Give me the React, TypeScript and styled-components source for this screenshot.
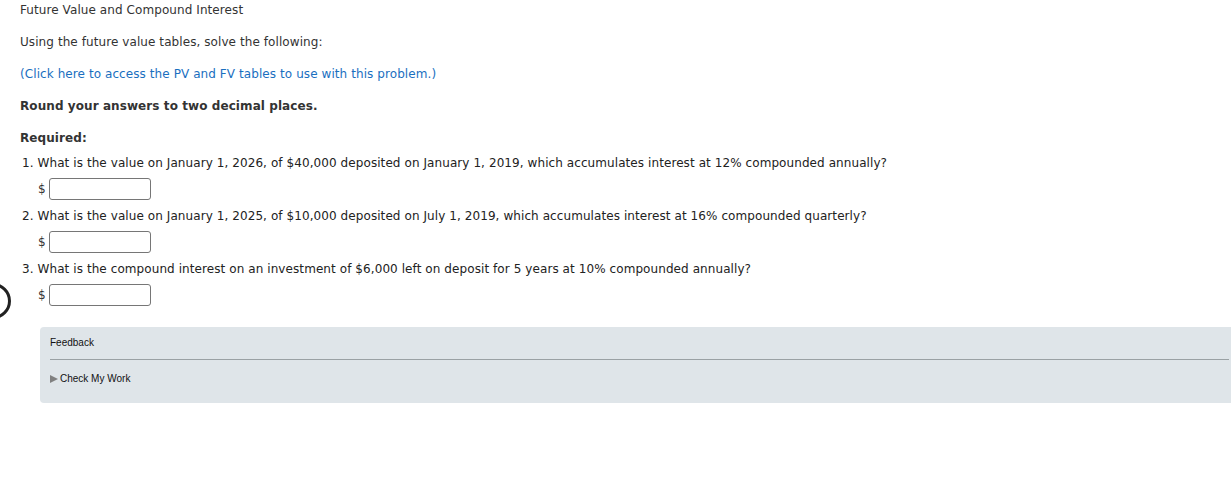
import React from "react";
import styled, { createGlobalStyle } from "styled-components";

const Global = createGlobalStyle`
  html, body { margin: 0; padding: 0; background: #fff; }
  body { font-family: "DejaVu Sans", Verdana, sans-serif; font-size: 12px; color: #333; letter-spacing: 0.08px; }
`;

const Page = styled.div`
  position: relative;
  padding: 1px 0 0 20px;
  overflow: hidden;
`;

const Para = styled.p<{ $bold?: boolean; $gap?: number }>`
  margin: 0 0 ${(p) => (p.$gap ?? 14)}px 0;
  line-height: 18px;
  font-weight: ${(p) => (p.$bold ? 700 : 400)};
`;

const Link = styled.a`
  color: #1a6fbf;
  text-decoration: none;
  cursor: pointer;
`;

const List = styled.ol`
  margin: 0;
  padding: 0 0 0 2px;
  list-style: none;
`;

const Item = styled.li`
  margin: 0 0 7px 0;
`;

const Question = styled.div`
  line-height: 18px;
  color: #222;
  margin-bottom: 6px;
`;

const AnswerRow = styled.div`
  display: flex;
  align-items: center;
  gap: 3px;
  padding-left: 16px;
  height: 22px;
`;

const Dollar = styled.span`
  font-size: 12px;
  color: #333;
`;

const Input = styled.input`
  box-sizing: border-box;
  width: 102px;
  height: 22px;
  border: 1px solid #767676;
  border-radius: 3px;
  padding: 0 4px;
  margin: 0;
  background: #fff;
`;

const Panel = styled.div`
  margin: 21px 0 0 20px;
  background: #dfe5e9;
  border-radius: 4px 0 0 4px;
  padding: 9px 2px 17px 10px;
  font-family: "Liberation Sans", Arial, sans-serif;
  font-size: 10px;
  letter-spacing: 0;
  color: #111;
`;

const PanelTitle = styled.div`
  line-height: 14px;
  padding-bottom: 9px;
  border-bottom: 1px solid #9aa1a4;
`;

const Toggle = styled.div`
  display: flex;
  align-items: center;
  line-height: 14px;
  margin-top: 12px;
`;

const Triangle = styled.span`
  display: inline-block;
  width: 0;
  height: 0;
  border-top: 4px solid transparent;
  border-bottom: 4px solid transparent;
  border-left: 8px solid #808080;
  margin: 0 2px 0 0;
`;

const Ring = styled.div`
  position: absolute;
  left: -25px;
  top: 283px;
  width: 36px;
  height: 36px;
  box-sizing: border-box;
  border: 3px solid #222;
  border-radius: 50%;
`;

const questions = [
  "What is the value on January 1, 2026, of $40,000 deposited on January 1, 2019, which accumulates interest at 12% compounded annually?",
  "What is the value on January 1, 2025, of $10,000 deposited on July 1, 2019, which accumulates interest at 16% compounded quarterly?",
  "What is the compound interest on an investment of $6,000 left on deposit for 5 years at 10% compounded annually?",
];

export default function App() {
  return (
    <>
      <Global />
      <Page>
        <Para>Future Value and Compound Interest</Para>
        <Para>Using the future value tables, solve the following:</Para>
        <Para>
          <Link>(Click here to access the PV and FV tables to use with this problem.)</Link>
        </Para>
        <Para $bold>Round your answers to two decimal places.</Para>
        <Para $bold $gap={7}>Required:</Para>
        <List>
          {questions.map((q, i) => (
            <Item key={i}>
              <Question>
                {i + 1}. {q}
              </Question>
              <AnswerRow>
                <Dollar>$</Dollar>
                <Input type="text" />
              </AnswerRow>
            </Item>
          ))}
        </List>
        <Panel>
          <PanelTitle>Feedback</PanelTitle>
          <Toggle>
            <Triangle />
            Check My Work
          </Toggle>
        </Panel>
        <Ring />
      </Page>
    </>
  );
}
